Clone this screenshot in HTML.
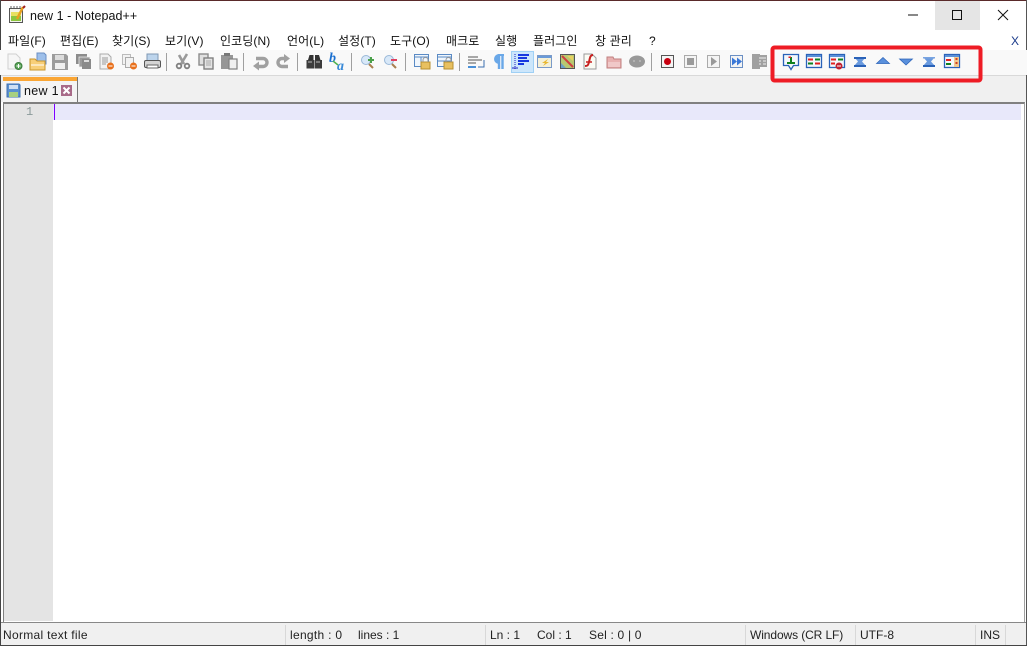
<!DOCTYPE html>
<html><head><meta charset="utf-8">
<style>
html,body{margin:0;padding:0;width:1027px;height:646px;overflow:hidden;background:#fff}
body{position:relative;font-family:"Liberation Sans","Noto Sans CJK KR",sans-serif;font-size:12px;color:#111}
.a{position:absolute}
.t{position:absolute;white-space:nowrap;line-height:16px}
.m{top:33px;font-size:12px;color:#111;letter-spacing:.1px}
.s{top:627px;font-size:12px;color:#222}
.sep{position:absolute;top:53px;width:1px;height:18px;background:#a0a0a0}
svg{position:absolute;left:0;top:0}
.ic{filter:blur(.3px)}
</style></head><body>
<div class="a" style="left:0;top:0;width:1027px;height:1px;background:#5a2a2a"></div>
<div class="a" style="left:0;top:0;width:1px;height:646px;background:#444"></div>
<div class="a" style="left:1026px;top:0;width:1px;height:646px;background:#555"></div>
<div class="a" style="left:0;top:50px;width:1027px;height:25px;background:#f9f9f9"></div>
<div class="a" style="left:1px;top:75px;width:1025px;height:27px;background:#f0f0f0;border-top:1px solid #d9d9d9;box-sizing:border-box"></div>
<div class="a" style="left:935px;top:1px;width:45px;height:29px;background:#e5e5e5"></div>

<div class="t" style="left:30px;top:8px;font-size:12.5px;letter-spacing:.05px">new 1 - Notepad++</div>

<div class="t m" style="left:8px">파일(F)</div>
<div class="t m" style="left:60px">편집(E)</div>
<div class="t m" style="left:112px">찾기(S)</div>
<div class="t m" style="left:165px">보기(V)</div>
<div class="t m" style="left:220px">인코딩(N)</div>
<div class="t m" style="left:287px">언어(L)</div>
<div class="t m" style="left:338px">설정(T)</div>
<div class="t m" style="left:390px">도구(O)</div>
<div class="t m" style="left:446px">매크로</div>
<div class="t m" style="left:495px">실행</div>
<div class="t m" style="left:533px">플러그인</div>
<div class="t m" style="left:595px">창 관리</div>
<div class="t m" style="left:649px">?</div>
<div class="t m" style="left:1011px;color:#1a3a8a">X</div>

<div class="sep" style="left:166px"></div><div class="sep" style="left:243px"></div><div class="sep" style="left:297px"></div>
<div class="sep" style="left:351px"></div><div class="sep" style="left:405px"></div><div class="sep" style="left:459px"></div>
<div class="sep" style="left:651px"></div>
<div class="a" style="left:511px;top:51px;width:21px;height:20px;background:#cce6fb;border:1px solid #9fd0f5"></div>

<svg width="1027" height="646" viewBox="0 0 1027 646">
<path d="M908 15h10" stroke="#111" stroke-width="1" fill="none"/>
<rect x="952.500" y="10.500" width="9" height="9" fill="none" stroke="#111"/>
<path d="M998 10l10 10M1008 10l-10 10" stroke="#111" fill="none"/>
</svg>
<svg class="ic" width="1027" height="646" viewBox="0 0 1027 646">
<!-- app icon -->
<rect x="9.500" y="8.500" width="13" height="14" fill="#f4f4ec" stroke="#555"/>
<rect x="11" y="12" width="10" height="9" fill="#8cc63f"/><rect x="11" y="12" width="10" height="4" fill="#e8e060"/>
<path d="M11 8v-2M14 8v-2M17 8v-2M20 8v-2" stroke="#666"/>
<path d="M17 19l6-12" stroke="#e8a020" stroke-width="2.500"/><path d="M23 8l2-2" stroke="#a02020" stroke-width="2"/>

<!-- new -->
<path d="M8 54h8l4 4v11H8z" fill="#f6f6f6" stroke="#d0d0d0"/><circle cx="18.500" cy="66" r="3.500" fill="#5aa65a" stroke="#3c7c3c"/><path d="M16.500 66h4M18.500 64v4" stroke="#fff"/>
<!-- open -->
<path d="M37 53h7l2 2v9h-9z" fill="#9dbfea" stroke="#6a8fc4"/><path d="M30 59h5l2 2h8v9H30z" fill="#f8cf78" stroke="#c8952c"/><path d="M31 65h13" stroke="#fff"/>
<!-- save -->
<path d="M52 54h14l2 2v14H52z" fill="#9c9c9c"/><rect x="55" y="55" width="9" height="5" fill="#dcdcdc"/><rect x="55" y="63" width="10" height="6" fill="#f0f0f0"/>
<!-- save all -->
<rect x="76" y="54" width="11" height="10" fill="#8c8c8c"/><rect x="79" y="57" width="11" height="10" fill="#9a9a9a" stroke="#f4f4f4" stroke-width=".7"/><rect x="82" y="59" width="9" height="10" fill="#8a8a8a"/><rect x="84" y="60" width="5" height="2" fill="#ddd"/>
<!-- close -->
<path d="M100 54h8l3 3v12h-11z" fill="#f2f2f2" stroke="#aaa"/><path d="M102 58h6M102 60h6M102 62h6M102 64h4" stroke="#999"/><circle cx="110.500" cy="66" r="3.500" fill="#e8701c"/><path d="M108.500 66h4" stroke="#fff"/>
<!-- close all -->
<rect x="122.500" y="54.500" width="8" height="10" fill="#f2f2f2" stroke="#bbb"/><rect x="125.500" y="57.500" width="8" height="10" fill="#f2f2f2" stroke="#aaa"/><circle cx="133.500" cy="66" r="3.500" fill="#e8701c"/><path d="M131.500 66h4" stroke="#fff"/>
<!-- print -->
<rect x="147" y="54" width="11" height="7" fill="#bcd4ec" stroke="#7e98b4"/><rect x="144.500" y="60.500" width="16" height="7" rx="1.500" fill="#d4d4d4" stroke="#555"/><rect x="147" y="65" width="11" height="3" fill="#fff" stroke="#666"/>
<!-- cut -->
<path d="M187 54l-6 10M179 55l5 9" stroke="#9a9a9a" stroke-width="2.600" fill="none"/><circle cx="179" cy="66" r="2.300" fill="none" stroke="#808080" stroke-width="1.800"/><circle cx="187" cy="66" r="2.300" fill="none" stroke="#808080" stroke-width="1.800"/>
<!-- copy -->
<rect x="199" y="54" width="9" height="11" fill="#e0e0e0" stroke="#8c8c8c" stroke-width="1.400"/><rect x="204" y="58" width="9" height="11" fill="#e4e4e4" stroke="#808080" stroke-width="1.400"/><path d="M206 61h5M206 63h5M206 65h5" stroke="#aaa"/>
<!-- paste -->
<rect x="221" y="55" width="12" height="14" fill="#969696"/><rect x="224" y="53" width="6" height="3" fill="#777"/><rect x="229" y="59" width="8" height="10" fill="#f0f0f0" stroke="#808080" stroke-width="1.200"/>
<!-- undo redo -->
<path d="M256 58.500h7a4 4 0 0 1 0 8h-6" fill="none" stroke="#a0a0a0" stroke-width="3.400"/><path d="M259 61.500v9l-6-4.500z" fill="#a0a0a0"/>
<path d="M288 66.500h-6a4 4 0 0 1 0-8h3" fill="none" stroke="#a0a0a0" stroke-width="3.400"/><path d="M284 54v9l6-4.500z" fill="#a0a0a0"/>
<!-- find -->
<path d="M308 60l1.500-5h4v5zM315 60v-5h4l1.500 5z" fill="#333"/><rect x="306.500" y="60" width="7.500" height="8.500" fill="#3c3c3c"/><rect x="314.500" y="60" width="7.500" height="8.500" fill="#3c3c3c"/><path d="M308 62h4M316 62h4" stroke="#bbb"/>
<!-- replace -->
<text x="329" y="62" font-family="Liberation Serif" font-weight="bold" font-style="italic" font-size="14" fill="#1a6fd0">b</text><text x="337" y="70" font-family="Liberation Serif" font-weight="bold" font-style="italic" font-size="14" fill="#3a8ad8">a</text><path d="M333 61l5 4" stroke="#50b050" stroke-width="1.500"/>
<!-- zoom in/out -->
<circle cx="366" cy="60" r="4.500" fill="#d8e8f8" stroke="#9ab8d8"/><path d="M369 64l4 4" stroke="#a88050" stroke-width="2"/><path d="M368 60h6M371 57v6" stroke="#4aa04a" stroke-width="2"/>
<circle cx="389" cy="60" r="4.500" fill="#d8e8f8" stroke="#9ab8d8"/><path d="M392 64l4 4" stroke="#a88050" stroke-width="2"/><path d="M391 60h6" stroke="#e04060" stroke-width="2"/>
<!-- sync -->
<rect x="414.500" y="54.500" width="14" height="12" fill="#f0f6fc" stroke="#5a8ac4"/><path d="M415 57h13M421 57v9" stroke="#5a8ac4"/><rect x="421" y="62" width="9" height="7" fill="#e8c060" stroke="#b89030"/><path d="M423 62v-2a2.500 2.500 0 0 1 5 0v2" fill="none" stroke="#999"/>
<rect x="437.500" y="54.500" width="14" height="12" fill="#f0f6fc" stroke="#5a8ac4"/><path d="M438 57h13M438 61h13" stroke="#5a8ac4"/><rect x="444" y="62" width="9" height="7" fill="#e8c060" stroke="#b89030"/><path d="M446 62v-2a2.500 2.500 0 0 1 5 0v2" fill="none" stroke="#999"/>
<!-- wrap -->
<path d="M468 57h10M468 60h14M468 63h8" stroke="#555"/><path d="M468 67h8" stroke="#4a90d8" stroke-width="2"/><path d="M484 60v7h-6" stroke="#3a70b0" fill="none"/>
<!-- para -->
<path d="M498 55h6M499 55a3.500 3.500 0 0 0 0 8" stroke="#6aa8e8" stroke-width="2" fill="#6aa8e8"/><path d="M499 55v14M502.500 55v14" stroke="#6aa8e8" stroke-width="2.400" fill="none"/>
<!-- indent guide -->
<path d="M515 54v15" stroke="#2020c0" stroke-dasharray="1 1"/><path d="M518 55h11M518 58h9M518 61h11M518 64h6" stroke="#1838e0" stroke-width="2"/><path d="M512 68h6" stroke="#2020c0"/>
<!-- udl etc -->
<rect x="537.500" y="55.500" width="14" height="12" fill="#f4f0d8" stroke="#7a9ac8"/><rect x="538" y="56" width="13" height="2" fill="#6a9ad8"/><path d="M548 59l-6 4h3l-2 3 6-4h-3z" fill="#e8b830"/>
<rect x="560.500" y="54.500" width="14" height="14" fill="#b8c870" stroke="#555"/><path d="M562 56l11 11" stroke="#d04040" stroke-width="2"/><path d="M567 56h6v5z" fill="#e8d060"/><path d="M561 63l5 5h-5z" fill="#6aa0c8"/>
<path d="M584 54h8l4 4v11h-12z" fill="#fbfbf4" stroke="#999"/><path d="M593 55c-3 0-3 3-4 7s-2 4-4 4" stroke="#c82020" stroke-width="2" fill="none"/><path d="M586 62h6" stroke="#c82020" stroke-width="1.500"/>
<path d="M607 57h6l1 2h7v9h-14z" fill="#e8b0b0" stroke="#c08080"/><path d="M608 62h12v5h-12z" fill="#f0c8c8"/>
<ellipse cx="637" cy="61.500" rx="8" ry="6" fill="#999"/><circle cx="634" cy="61" r="1" fill="#bbb"/><circle cx="640" cy="61" r="1" fill="#bbb"/>
<!-- macro -->
<rect x="661.500" y="55.500" width="12" height="12" fill="#f4f4f4" stroke="#555"/><circle cx="667.500" cy="61.500" r="3.500" fill="#c80010"/>
<rect x="684.500" y="55.500" width="12" height="12" fill="#f4f4f4" stroke="#aaa"/><rect x="687" y="58" width="7" height="7" fill="#9a9a9a"/>
<rect x="707.500" y="55.500" width="12" height="12" fill="#f4f4f4" stroke="#aaa"/><path d="M711 57l6 4.500-6 4.500z" fill="#999"/>
<rect x="730.500" y="55.500" width="12" height="12" fill="#f4f4f4" stroke="#6a8fc4"/><path d="M732 57.500l5 4-5 4zM737 57.500l5 4-5 4z" fill="#3a78d8"/>
<rect x="752" y="54" width="8" height="15" fill="#a0a0a0"/><rect x="757" y="55" width="10" height="12" fill="#a0a0a0"/><path d="M759 58h7M759 61h2M763 61h3M759 64h2M763 64h3" stroke="#eee"/>

<!-- red-boxed icons -->
<path d="M783.500 54.500h15v11h-5l-2.500 4-2.500-4h-5z" fill="#f4f8fc" stroke="#2a62b8" stroke-width="1.300"/><path d="M790 57h2v5h-2z" fill="#108020"/><path d="M788.500 56.500h2.500v1.500h-2.500z" fill="#e02020"/><path d="M787 63h8" stroke="#108020" stroke-width="2"/>
<rect x="806.500" y="54.500" width="15" height="13" fill="#f4f8fc" stroke="#2a62b8" stroke-width="1.300"/><path d="M807 56h14" stroke="#5a90d8" stroke-width="2"/><path d="M808 59.500h5M815 63.500h5" stroke="#e02020" stroke-width="2"/><path d="M815 59.500h5M808 63.500h5" stroke="#108020" stroke-width="2"/>
<rect x="829.500" y="54.500" width="15" height="13" fill="#f4f8fc" stroke="#2a62b8" stroke-width="1.300"/><path d="M830 56h14" stroke="#5a90d8" stroke-width="2"/><path d="M831 59.500h5M831 63.500h4" stroke="#e02020" stroke-width="2"/><path d="M838 59.500h5" stroke="#108020" stroke-width="2"/><circle cx="839" cy="66" r="3.500" fill="#c02030"/><path d="M837 66h4" stroke="#fff"/>
<path d="M854 57h12l-4 4.500 4 4.500h-12l4-4.500z" fill="#6a9ade"/><rect x="854" y="57" width="12" height="2" fill="#2a62b8"/><rect x="854" y="65" width="12" height="2" fill="#2a62b8"/>
<path d="M883 57.500l6.500 6h-13z" fill="#5a90dc" stroke="#2a62b8" stroke-width=".7"/>
<path d="M906 65l-6.500-6h13z" fill="#5a90dc" stroke="#2a62b8" stroke-width=".7"/>
<path d="M923 57h12l-4 4.500 4 4.500h-12l4-4.500z" fill="#6a9ade"/><rect x="923" y="65" width="12" height="2" fill="#2a62b8"/><rect x="923" y="57" width="12" height="1.500" fill="#7aa4e0"/>
<rect x="944.500" y="54.500" width="15" height="13" fill="#f4f8fc" stroke="#2a62b8" stroke-width="1.300"/><path d="M945 56h14" stroke="#5a90d8" stroke-width="2"/><path d="M946 60h5" stroke="#e02020" stroke-width="2"/><path d="M946 64h5" stroke="#108020" stroke-width="2"/><rect x="954" y="57" width="5" height="10" fill="#f0c890"/><path d="M956.500 58v8" stroke="#d04020" stroke-width="2" stroke-dasharray="2 2"/>
</svg>
<svg width="1027" height="646" viewBox="0 0 1027 646">
<rect x="772.500" y="47.500" width="208" height="33" rx="2" fill="none" stroke="#ee1c25" stroke-width="4"/>
</svg>

<!-- tab -->
<div class="a" style="left:3px;top:77px;width:75px;height:4px;background:#faa635"></div>
<div class="a" style="left:3px;top:81px;width:74px;height:21px;background:#f4f4f4;border-right:1px solid #777"></div>
<div class="a" style="left:77px;top:77px;width:1px;height:25px;background:#777"></div>
<svg class="ic" width="1027" height="646" viewBox="0 0 1027 646">
<path d="M7 84h12l1 1v12H7z" fill="#5a90d0" stroke="#4070b0"/><rect x="9" y="85" width="9" height="4" fill="#cfe0f4"/><rect x="9" y="92" width="9" height="5" fill="#a8d080"/>
<rect x="61" y="85" width="11" height="11" fill="#a86a88"/><path d="M63.500 87.500l6 6M69.500 87.500l-6 6" stroke="#fff" stroke-width="2"/>
</svg>
<div class="t" style="left:24px;top:83px;font-size:12.500px;letter-spacing:.3px">new 1</div>

<!-- editor -->
<div class="a" style="left:3px;top:102px;width:1022px;height:521px;border:1px solid #a0a0a0;border-top:2px solid #808080;border-left:1px solid #808080;box-sizing:border-box;background:#fff"></div>
<div class="a" style="left:4px;top:104px;width:49px;height:517px;background:#e4e4e4"></div>
<div class="a" style="left:53px;top:104px;width:968px;height:16px;background:#e8e8fa"></div>
<div class="a" style="left:54px;top:104px;width:1px;height:16px;background:#8000ff"></div>
<div class="t" style="left:26px;top:104px;font-family:'Liberation Mono',monospace;font-size:12px;color:#8a9a9a">1</div>

<!-- status -->
<div class="a" style="left:1px;top:622px;width:1025px;height:23px;background:#f0f0f0;border-top:1px solid #888;box-sizing:border-box"></div>
<div class="a" style="left:0;top:645px;width:1027px;height:1px;background:#444"></div>
<div class="a" style="left:285px;top:625px;width:1px;height:20px;background:#d8d8d8"></div>
<div class="a" style="left:485px;top:625px;width:1px;height:20px;background:#d8d8d8"></div>
<div class="a" style="left:745px;top:625px;width:1px;height:20px;background:#d8d8d8"></div>
<div class="a" style="left:855px;top:625px;width:1px;height:20px;background:#d8d8d8"></div>
<div class="a" style="left:975px;top:625px;width:1px;height:20px;background:#d8d8d8"></div>
<div class="a" style="left:1005px;top:625px;width:1px;height:20px;background:#d8d8d8"></div>
<div class="t s" style="left:3px;letter-spacing:.3px">Normal text file</div>
<div class="t s" style="left:290px;letter-spacing:.3px">length : 0</div>
<div class="t s" style="left:358px">lines : 1</div>
<div class="t s" style="left:490px">Ln : 1</div>
<div class="t s" style="left:537px">Col : 1</div>
<div class="t s" style="left:589px;letter-spacing:.2px">Sel : 0 | 0</div>
<div class="t s" style="left:750px;letter-spacing:-.1px">Windows (CR LF)</div>
<div class="t s" style="left:860px">UTF-8</div>
<div class="t s" style="left:980px">INS</div>
</body></html>
